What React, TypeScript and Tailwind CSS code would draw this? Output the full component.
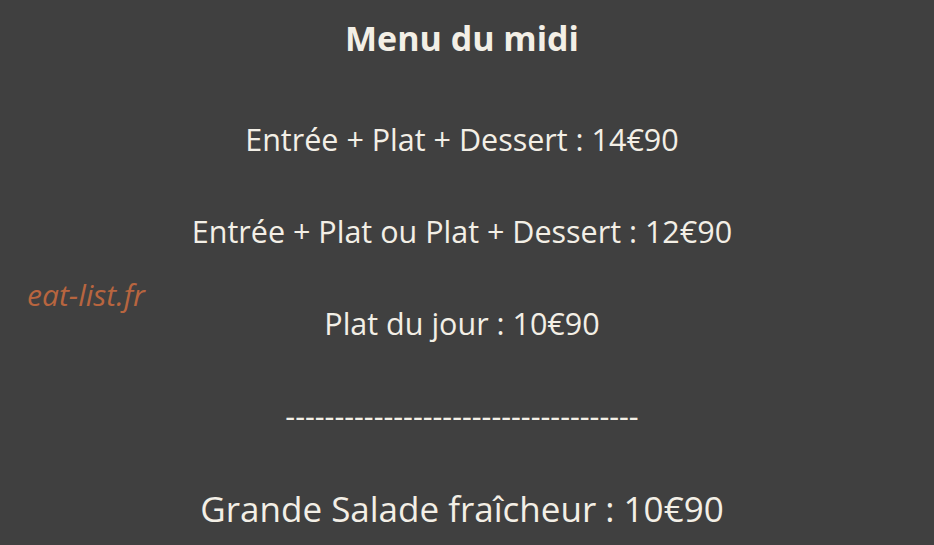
export default function App() {
  const lines = [
    "Entrée + Plat + Dessert : 14€90",
    "Entrée + Plat ou Plat + Dessert : 12€90",
    "Plat du jour : 10€90",
    "------------------------------------",
  ];

  return (
    <div className="relative w-[934px] h-[545px] overflow-hidden bg-[#404040] text-[#f3efe6] font-['Open_Sans',sans-serif]">
      {/* watermark */}
      <span className="absolute left-[27px] top-[270px] text-[30px] leading-[50px] italic text-[#b8653f]">eat-list.fr</span>

      <div className="flex flex-col items-center text-center pr-[10px]">
        <h1 className="text-[34px] font-bold leading-[76px]">Menu du midi</h1>
        <div className="mt-[17px] flex flex-col items-center">
          {lines.map((line) => (
            <p key={line} className="text-[30.5px] leading-[92px] whitespace-nowrap">
              {line}
            </p>
          ))}
          <p className="mt-[2px] text-[35px] leading-[92px] whitespace-nowrap">Grande Salade fraîcheur : 10€90</p>
        </div>
      </div>
    </div>
  );
}
